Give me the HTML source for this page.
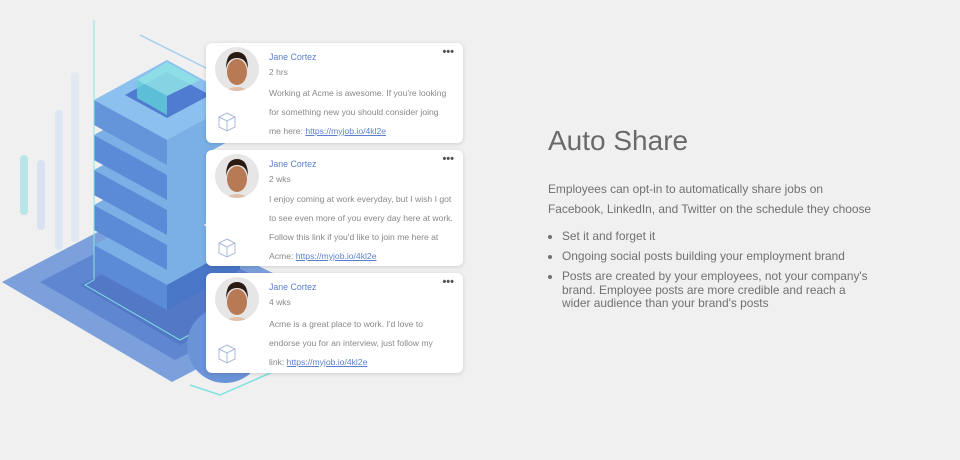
<!DOCTYPE html>
<html><head><meta charset="utf-8"><style>
body{margin:0;width:960px;height:460px;background:#f0f0f0;position:relative;overflow:hidden;font-family:"Liberation Sans",sans-serif}
.card{position:absolute;left:206px;width:257px;background:#fff;border-radius:6px;box-shadow:0 1px 4px rgba(0,0,0,.15)}
.av{position:absolute;left:9px;top:4px;width:44px;height:44px;border-radius:50%;background:#e6e6e6;overflow:hidden}
.cube{position:absolute;left:11px;width:20px;height:22px}
.nm{position:absolute;left:63px;top:9px;font-size:8.8px;color:#5b7fd0}
.tm{position:absolute;left:63px;top:24px;font-size:8.5px;color:#888}
.tx{position:absolute;left:63px;font-size:8.6px;color:#888;line-height:19px;white-space:nowrap}
.tx a{color:#5b7fd0;text-decoration:underline}
.dots{position:absolute;right:9px;top:3px;font-size:11px;color:#555;font-weight:bold}
h1{position:absolute;left:548px;top:125px;margin:0;font-weight:normal;font-size:28px;color:#6a6a6a}
.p{position:absolute;left:548px;top:180px;font-size:11.9px;color:#707070;line-height:19.5px}
ul{position:absolute;left:548px;top:230px;margin:0;padding:0 0 0 14px;width:306px;font-size:11.9px;color:#707070;line-height:13.5px}
li{margin-bottom:6.5px}
</style></head><body>
<svg width="470" height="460" style="position:absolute;left:0;top:0">
<polygon points="2,282 140,210 330,300 172,382" fill="#7ba0dc"/>
<polygon points="40,282 150,225 300,298 175,360" fill="#5f86d0"/>
<polygon points="80,285 160,245 270,300 180,345" fill="#5379c6"/>
<rect x="20" y="155" width="8" height="60" rx="4" fill="#9ee0e4" opacity=".7"/>
<rect x="37" y="160" width="8" height="70" rx="4" fill="#d8e2f0"/>
<rect x="55" y="110" width="8" height="140" rx="4" fill="#dde6f2"/>
<rect x="71" y="72" width="8" height="170" rx="4" fill="#e2e9f3"/>
<g>
<polygon points="94,245 167,285 240,245 167,205" fill="#7ab0e6"/>
<polygon points="94,245 167,285 167,310 94,270" fill="#5b8bd6"/>
<polygon points="167,285 240,245 240,270 167,310" fill="#4a76c8"/>
<polygon points="94,205 167,245 240,205 167,165" fill="#7ab0e6"/>
<polygon points="94,205 167,245 167,270 94,230" fill="#5b8bd6"/>
<polygon points="94,170 167,210 240,170 167,130" fill="#7ab0e6"/>
<polygon points="94,170 167,210 167,235 94,195" fill="#5b8bd6"/>
<polygon points="94,135 167,175 240,135 167,95" fill="#7ab0e6"/>
<polygon points="94,135 167,175 167,200 94,160" fill="#5b8bd6"/>
<polygon points="94,100 167,140 240,100 167,60" fill="#8cc0ee"/>
<polygon points="94,100 167,140 167,165 94,125" fill="#6494da"/>
<polygon points="125,95 167,118 210,95 167,72" fill="#4f7bd0"/>
<polygon points="137,80 167,96 200,80 167,62" fill="#8ee3e6" opacity=".85"/>
<polygon points="137,80 167,96 167,115 137,98" fill="#5fcfd8" opacity=".8"/>
</g>
<line x1="94" y1="20" x2="94" y2="280" stroke="#8fe3e3" stroke-width="1"/>
<polyline points="94,280 85,285 180,340 300,275" fill="none" stroke="#7fe0e3" stroke-width="1"/>
<polyline points="190,385 220,395 300,360" fill="none" stroke="#7fe0e3" stroke-width="1.5"/>
<line x1="140" y1="35" x2="210" y2="70" stroke="#9fd0f0" stroke-width="1.5"/>
<circle cx="225" cy="345" r="38" fill="#6a93d8"/>
</svg>

<div class="card" style="top:43px;height:100px">
<div class="av"><svg width="44" height="44"><ellipse cx="22" cy="25" rx="10" ry="13" fill="#b87a55"/><path d="M11 22 Q11 5 22 5 Q33 5 33 22 Q31 11 22 11 Q13 11 11 22Z" fill="#2a1a12"/><path d="M10 44 Q22 36 34 44Z" fill="#e0c0a8"/></svg></div>
<svg class="cube" style="top:68px" viewBox="0 0 20 22"><path d="M10 2 L18 6 L18 16 L10 20 L2 16 L2 6Z M2 6 L10 10 L18 6 M10 10 L10 20" fill="none" stroke="#a8b8dc" stroke-width="1"/></svg>
<div class="nm">Jane Cortez</div><div class="tm">2 hrs</div><div class="dots">•••</div>
<div class="tx" style="top:41px">Working at Acme is awesome. If you're looking<br>for something new you should consider joing<br>me here: <a>https://myjob.io/4kl2e</a></div>
</div>

<div class="card" style="top:150px;height:116px">
<div class="av"><svg width="44" height="44"><ellipse cx="22" cy="25" rx="10" ry="13" fill="#b87a55"/><path d="M11 22 Q11 5 22 5 Q33 5 33 22 Q31 11 22 11 Q13 11 11 22Z" fill="#2a1a12"/><path d="M10 44 Q22 36 34 44Z" fill="#e0c0a8"/></svg></div>
<svg class="cube" style="top:87px" viewBox="0 0 20 22"><path d="M10 2 L18 6 L18 16 L10 20 L2 16 L2 6Z M2 6 L10 10 L18 6 M10 10 L10 20" fill="none" stroke="#a8b8dc" stroke-width="1"/></svg>
<div class="nm">Jane Cortez</div><div class="tm">2 wks</div><div class="dots">•••</div>
<div class="tx" style="top:40px">I enjoy coming at work everyday, but I wish I got<br>to see even more of you every day here at work.<br>Follow this link if you'd like to join me here at<br>Acme: <a>https://myjob.io/4kl2e</a></div>
</div>

<div class="card" style="top:273px;height:100px">
<div class="av"><svg width="44" height="44"><ellipse cx="22" cy="25" rx="10" ry="13" fill="#b87a55"/><path d="M11 22 Q11 5 22 5 Q33 5 33 22 Q31 11 22 11 Q13 11 11 22Z" fill="#2a1a12"/><path d="M10 44 Q22 36 34 44Z" fill="#e0c0a8"/></svg></div>
<svg class="cube" style="top:70px" viewBox="0 0 20 22"><path d="M10 2 L18 6 L18 16 L10 20 L2 16 L2 6Z M2 6 L10 10 L18 6 M10 10 L10 20" fill="none" stroke="#a8b8dc" stroke-width="1"/></svg>
<div class="nm">Jane Cortez</div><div class="tm">4 wks</div><div class="dots">•••</div>
<div class="tx" style="top:42px">Acme is a great place to work. I'd love to<br>endorse you for an interview, just follow my<br>link: <a>https://myjob.io/4kl2e</a></div>
</div>

<h1>Auto Share</h1>
<div class="p">Employees can opt-in to automatically share jobs on<br>Facebook, LinkedIn, and Twitter on the schedule they choose</div>
<ul>
<li>Set it and forget it</li>
<li>Ongoing social posts building your employment brand</li>
<li>Posts are created by your employees, not your company's brand. Employee posts are more credible and reach a wider audience than your brand's posts</li>
</ul>
</body></html>
